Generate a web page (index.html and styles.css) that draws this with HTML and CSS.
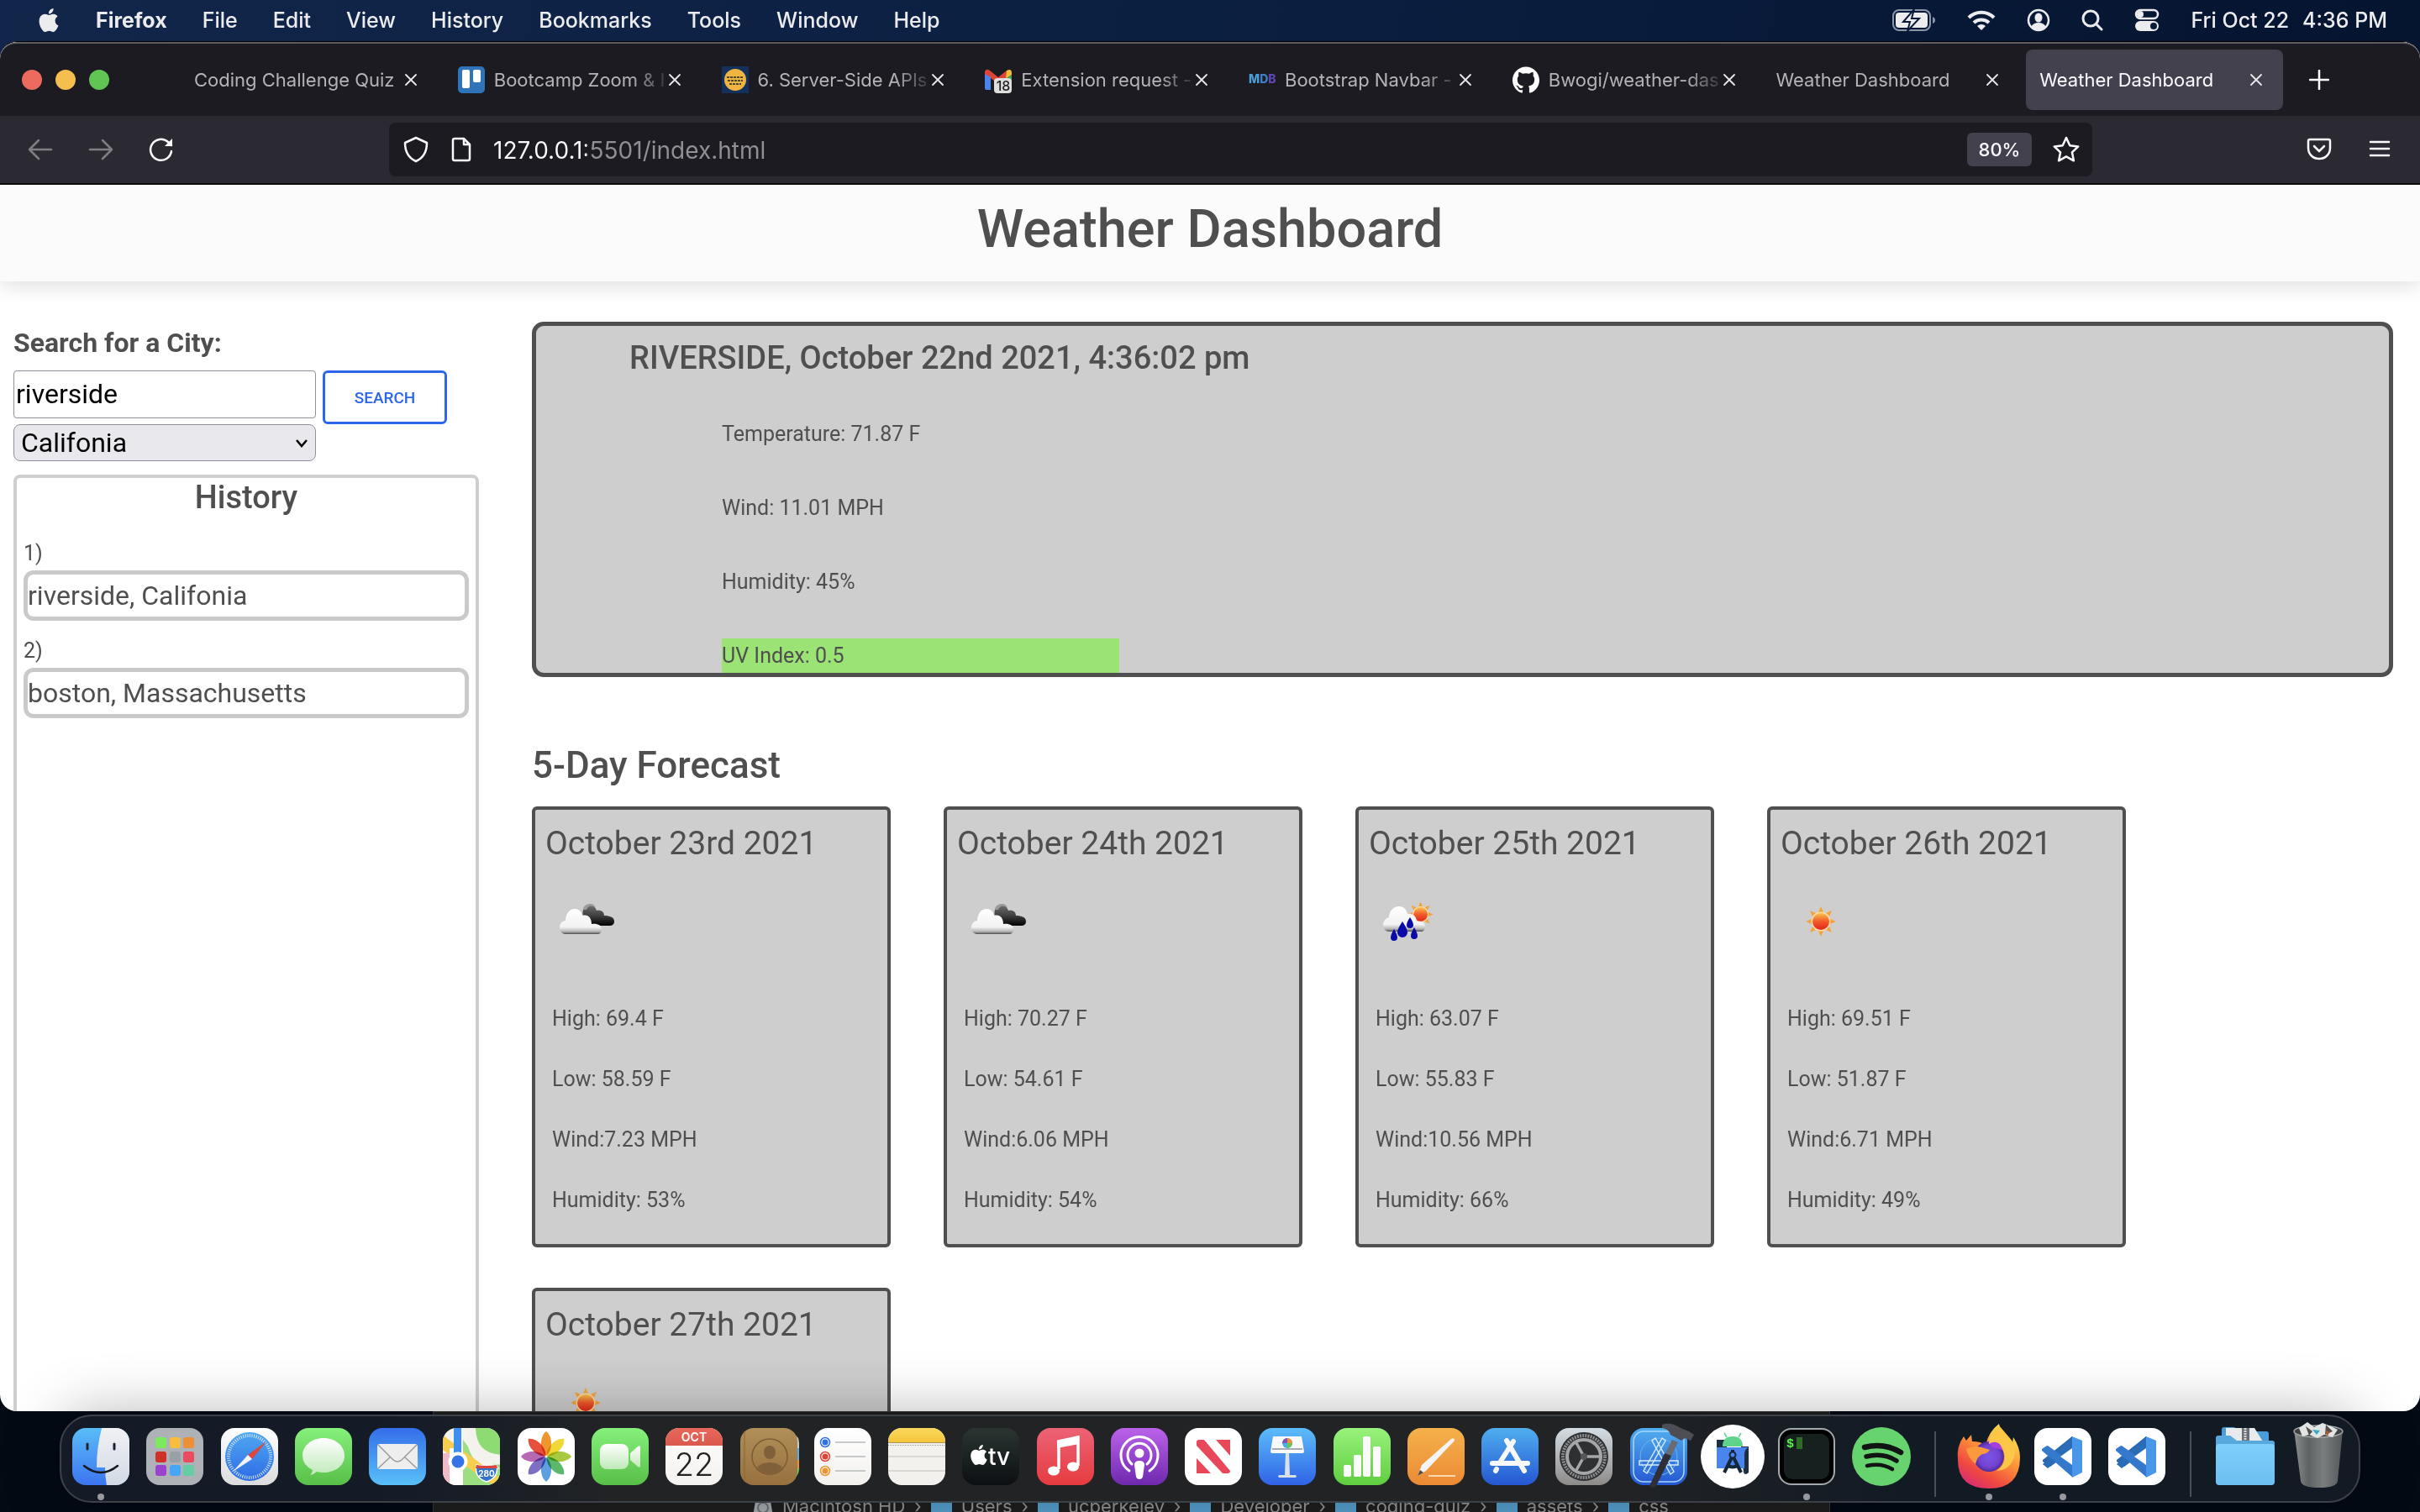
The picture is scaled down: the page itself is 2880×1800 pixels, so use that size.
FILE: index.html
```html
<!DOCTYPE html>
<html lang="en">
<head>
<meta charset="utf-8">
<meta name="viewport" content="width=device-width, initial-scale=1">
<title>Weather Dashboard</title>
<link rel="stylesheet" href="styles.css">
</head>
<body>
<svg class="defs" aria-hidden="true">
  <defs>
    <linearGradient id="g-finder" x2="0" y2="1"><stop offset="0" stop-color="#5cc3f8"/><stop offset="1" stop-color="#3a6ef0"/></linearGradient>
    <linearGradient id="g-face" x2="0" y2="1"><stop offset="0" stop-color="#f3f3f5"/><stop offset="1" stop-color="#cfd8e4"/></linearGradient>
    <linearGradient id="g-white" x2="0" y2="1"><stop offset="0" stop-color="#fff"/><stop offset="1" stop-color="#dcdcdc"/></linearGradient>
    <linearGradient id="g-paper" x2="0" y2="1"><stop offset="0" stop-color="#fff"/><stop offset="1" stop-color="#f3f1ee"/></linearGradient>
    <linearGradient id="g-green" x2="0" y2="1"><stop offset="0" stop-color="#86f07c"/><stop offset="1" stop-color="#58bf48"/></linearGradient>
    <linearGradient id="g-bubble" x2="0" y2="1"><stop offset="0" stop-color="#fff"/><stop offset="1" stop-color="#bfe9b8"/></linearGradient>
    <linearGradient id="g-mail" x2="0" y2="1"><stop offset="0" stop-color="#356eea"/><stop offset="1" stop-color="#58c0f8"/></linearGradient>
    <linearGradient id="g-compass" x2="0" y2="1"><stop offset="0" stop-color="#4fa8f0"/><stop offset="1" stop-color="#2e6be6"/></linearGradient>
    <linearGradient id="g-cal" x2="0" y2="1"><stop offset="0" stop-color="#ee6a5e"/><stop offset="1" stop-color="#d9594d"/></linearGradient>
    <linearGradient id="g-book" x2="0" y2="1"><stop offset="0" stop-color="#b18f58"/><stop offset="1" stop-color="#97703e"/></linearGradient>
    <linearGradient id="g-notes" x2="0" y2="1"><stop offset="0" stop-color="#fbdd68"/><stop offset="1" stop-color="#f5c63c"/></linearGradient>
    <linearGradient id="g-tv" x2="0" y2="1"><stop offset="0" stop-color="#2a3531"/><stop offset="1" stop-color="#0c0f12"/></linearGradient>
    <linearGradient id="g-music" x2="0" y2="1"><stop offset="0" stop-color="#ec6376"/><stop offset="1" stop-color="#e63b40"/></linearGradient>
    <linearGradient id="g-pod" x2="0" y2="1"><stop offset="0" stop-color="#bb62ea"/><stop offset="1" stop-color="#6e29ae"/></linearGradient>
    <linearGradient id="g-key" x2="0" y2="1"><stop offset="0" stop-color="#5cbcf9"/><stop offset="1" stop-color="#2f63e6"/></linearGradient>
    <linearGradient id="g-num" x2="0" y2="1"><stop offset="0" stop-color="#98f27c"/><stop offset="1" stop-color="#5fce3f"/></linearGradient>
    <linearGradient id="g-pages" x2="0" y2="1"><stop offset="0" stop-color="#f4b14b"/><stop offset="1" stop-color="#ec8a35"/></linearGradient>
    <linearGradient id="g-store" x2="0" y2="1"><stop offset="0" stop-color="#50aeef"/><stop offset="1" stop-color="#2557d2"/></linearGradient>
    <linearGradient id="g-sys" x2="0" y2="1"><stop offset="0" stop-color="#d4dde4"/><stop offset="1" stop-color="#8d8b89"/></linearGradient>
    <linearGradient id="g-fox" x1=".8" y1="0" x2=".2" y2="1"><stop offset="0" stop-color="#fff05a"/><stop offset=".45" stop-color="#fb8e38"/><stop offset=".75" stop-color="#f0483f"/><stop offset="1" stop-color="#d42a78"/></linearGradient>
    <radialGradient id="g-globe"><stop offset="0" stop-color="#7a55e8"/><stop offset=".7" stop-color="#7443cf"/><stop offset="1" stop-color="#4d2a9e"/></radialGradient>
    <linearGradient id="g-folder" x2="0" y2="1"><stop offset="0" stop-color="#7fcefb"/><stop offset="1" stop-color="#6dbff2"/></linearGradient>
    <linearGradient id="g-bin"><stop offset="0" stop-color="#8c8e8f"/><stop offset=".3" stop-color="#5f6263"/><stop offset=".6" stop-color="#7b7e7f"/><stop offset="1" stop-color="#55585a"/></linearGradient>
    <linearGradient id="g-cloud" x2="0" y2="1"><stop offset="0" stop-color="#fff"/><stop offset=".72" stop-color="#f2f2f2"/><stop offset=".9" stop-color="#b5b5b5"/><stop offset="1" stop-color="#4c4c4c"/></linearGradient>
    <linearGradient id="g-dark" x2="0" y2="1"><stop offset="0" stop-color="#6e6e6e"/><stop offset=".5" stop-color="#3f3f3f"/><stop offset="1" stop-color="#000"/></linearGradient>
    <linearGradient id="g-sun" x2="0" y2="1"><stop offset="0" stop-color="#f8c34c"/><stop offset=".5" stop-color="#f25a2a"/><stop offset="1" stop-color="#e3261c"/></linearGradient>
    <clipPath id="clip-app"><rect x="6" y="6" width="68" height="68" rx="16"/></clipPath>
    <path id="apple" d="M12.152 6.896c-.948 0-2.415-1.078-3.96-1.04-2.04.027-3.91 1.183-4.961 3.014-2.117 3.675-.546 9.103 1.519 12.09 1.013 1.454 2.208 3.09 3.792 3.039 1.52-.065 2.09-.987 3.935-.987 1.831 0 2.35.987 3.96.948 1.637-.026 2.676-1.48 3.676-2.948 1.156-1.688 1.636-3.325 1.662-3.415-.039-.013-3.182-1.221-3.22-4.857-.026-3.04 2.48-4.494 2.597-4.559-1.429-2.09-3.623-2.324-4.39-2.376-2-.156-3.675 1.09-4.61 1.09zM15.53 3.83c.843-1.012 1.4-2.427 1.245-3.83-1.207.052-2.662.805-3.532 1.818-.78.896-1.454 2.338-1.273 3.714 1.338.104 2.715-.688 3.559-1.701"/>
    <path id="close" d="M2 2l12 12M14 2L2 14" fill="none" stroke="currentColor" stroke-width="1.8" stroke-linecap="round"/>
    <path id="petal" d="M40 39c-7-5-9-22 0-29 9 7 7 24 0 29z"/>
    <g id="sun">
      <path fill="#f2a43a" d="M40 22l3 7h-6zM40 58l3-7h-6zM22 40l7 3v-6zM58 40l-7 3v-6zM27 27l7 3-4 4zM53 27l-3 7-4-4zM27 53l3-7 4 4zM53 53l-7-3 4-4z"/>
      <circle cx="40" cy="40" r="11.500" fill="#fbd9a0"/><circle cx="40" cy="40" r="10" fill="url(#g-sun)"/>
    </g>
    <symbol id="w-sun" viewBox="0 0 80 80"><use href="#sun"/></symbol>
    <symbol id="w-cloud" viewBox="0 0 80 80">
      <path fill="url(#g-dark)" d="M37 34c-2-8 2-13 8-13 5 0 7 3 8 6 6-1 9 2 9 6 7 0 12 2 12 7 0 4-3 5-6 5H46z"/>
      <path fill="#9a9a9a" d="M37 26c0-4 4-7 8-7s6 2 7 5c-4-4-9-3-11 2z"/>
      <path fill="url(#g-cloud)" d="M15 55c-4-1-6-4-6-8s3-8 7-8c0-8 5-14 11-14 5 0 8 3 9 8 7-2 11 3 11 10 6-1 12 1 12 6 0 4-2 6-5 6z"/>
    </symbol>
    <symbol id="w-rain" viewBox="0 0 80 80">
      <use href="#sun" transform="translate(20 -2) scale(.84)"/>
      <path fill="url(#g-cloud)" d="M15 52c-4-1-6-4-6-8s3-8 7-9c0-7 5-13 12-13 6 0 9 4 10 9 6-1 11 3 11 9 6-1 10 1 10 6 0 4-2 6-5 6z"/>
      <g fill="#0a0aa8"><path d="M22 49q4 7 4 10a4 4 0 0 1-8 0q0-3 4-10zM32 40q6 9 6 13a6 6 0 0 1-12 0q0-4 6-13zM41 35q4 6 4 9a4 4 0 0 1-8 0q0-3 4-9zM46 47q4 7 4 10a4 4 0 0 1-8 0q0-3 4-10z"/></g>
    </symbol>
    <symbol id="vscode" viewBox="0 0 80 80">
      <rect x="6" y="6" width="68" height="68" rx="16" fill="#fff"/>
      <path fill="#2b68b0" d="M51 16v17L25 52l-9-6v-2z"/><path fill="#3b82cf" d="M51 64V48L21 27l-6 4v2z"/>
      <path fill="#2a6cb5" d="M51 16v16L22 54l-6-5z"/><path fill="#3579cc" d="M15 32l7-5 29 21v16z"/>
      <path fill="#4a97ea" d="M51 16l12 5v38l-12 6z"/><path fill="#fff" d="M51 30v20L37 40z"/>
    </symbol>
  </defs>
</svg>

<header class="menubar">
  <nav class="menus" aria-label="Menu bar">
    <svg class="apple" viewBox="0 0 24 24" fill="#ececee" role="img" aria-label="Apple"><use href="#apple"/></svg>
    <button class="menu menu-app">Firefox</button>
    <button class="menu">File</button>
    <button class="menu">Edit</button>
    <button class="menu">View</button>
    <button class="menu">History</button>
    <button class="menu">Bookmarks</button>
    <button class="menu">Tools</button>
    <button class="menu">Window</button>
    <button class="menu">Help</button>
  </nav>
  <div class="status">
    <svg width="52" height="26" viewBox="0 0 52 26"><rect x="1" y="1" width="44" height="24" rx="7" fill="none" stroke="#8b95a8" stroke-width="2"/><path d="M48 9q3 1 3 4t-3 4z" fill="#8b95a8"/><rect x="4" y="4" width="38" height="18" rx="4" fill="#ececee"/><path d="M26 0L13 15h8l-3 11 14-15h-9z" fill="#ececee" stroke="#071a3a" stroke-width="2"/></svg>
    <svg width="34" height="26" viewBox="0 0 34 26" fill="none" stroke="#ececee" stroke-width="4"><path d="M2 10a21 21 0 0 1 30 0M8 16a13 13 0 0 1 18 0"/><path d="M12 20a7 7 0 0 1 10 0l-5 5z" fill="#ececee" stroke="none"/></svg>
    <svg width="28" height="28" viewBox="0 0 28 28"><circle cx="14" cy="14" r="12" fill="none" stroke="#ececee" stroke-width="2.500"/><ellipse cx="14" cy="11" rx="4.500" ry="5.500" fill="#ececee"/><path d="M5 22q3-5 9-5t9 5q-4 4-9 4t-9-4z" fill="#ececee"/></svg>
    <svg width="26" height="26" viewBox="0 0 26 26" fill="none" stroke="#ececee" stroke-width="3" stroke-linecap="round"><circle cx="11" cy="11" r="9"/><path d="M18 18l6 6"/></svg>
    <svg width="30" height="28" viewBox="0 0 30 28"><rect x="2" y="2" width="26" height="10" rx="5" fill="none" stroke="#ececee" stroke-width="2.500"/><circle cx="7" cy="7" r="4" fill="#ececee"/><rect x="1" y="15" width="28" height="12" rx="6" fill="#ececee"/><circle cx="23" cy="21" r="4" fill="#071a3a"/></svg>
    <time class="clock"><span>Fri Oct 22</span><span>4:36 PM</span></time>
  </div>
</header>

<main class="browser">
  <div class="tabbar">
    <div class="lights"><i class="light red"></i><i class="light amber"></i><i class="light green"></i></div>
    <div class="tabs" role="tablist">
      <div class="tab" role="tab"><span class="tab-title">Coding Challenge Quiz</span><button class="tab-close" aria-label="Close tab"><svg viewBox="0 0 16 16"><use href="#close"/></svg></button></div>
      <div class="tab" role="tab"><svg class="favicon" viewBox="0 0 32 32"><rect width="32" height="32" rx="5" fill="#2f74b8"/><rect x="5" y="4" width="9" height="22" rx="2" fill="#fff"/><rect x="18" y="4" width="9" height="15" rx="2" fill="#fff"/></svg><span class="tab-title fade">Bootcamp Zoom &amp; I</span><button class="tab-close" aria-label="Close tab"><svg viewBox="0 0 16 16"><use href="#close"/></svg></button></div>
      <div class="tab" role="tab"><svg class="favicon" viewBox="0 0 32 32"><rect width="32" height="32" fill="#14305c"/><circle cx="16" cy="16" r="13" fill="#f0b440"/><path d="M6 13h20M7 17h18M9 21h14" stroke="#4a4630" stroke-width="2" stroke-dasharray="3 1"/></svg><span class="tab-title fade">6. Server-Side APIs:</span><button class="tab-close" aria-label="Close tab"><svg viewBox="0 0 16 16"><use href="#close"/></svg></button></div>
      <div class="tab" role="tab"><svg class="favicon" viewBox="0 0 32 32"><path d="M0 8v18q0 2 2 2h5V12z" fill="#4a82ee"/><path d="M0 6q2-4 6-1l10 8 10-8v9L16 21 7 14v-1L0 9z" fill="#dc4437"/><path d="M26 5q6-3 6 3v2l-7 5z" fill="#f3bc3a"/><path d="M25 15l7-5v8h-7z" fill="#3aa757"/><rect x="11" y="14" width="21" height="18" rx="4" fill="#dedede"/><text class="fav-count" x="22" y="29" text-anchor="middle">18</text></svg><span class="tab-title fade">Extension request -</span><button class="tab-close" aria-label="Close tab"><svg viewBox="0 0 16 16"><use href="#close"/></svg></button></div>
      <div class="tab" role="tab"><svg class="favicon" viewBox="0 0 32 32"><text class="fav-mdb" x="0" y="20"><tspan fill="#4a9fd8">M</tspan><tspan fill="#3d7fc4">D</tspan><tspan fill="#5a48b0">B</tspan></text></svg><span class="tab-title fade">Bootstrap Navbar -</span><button class="tab-close" aria-label="Close tab"><svg viewBox="0 0 16 16"><use href="#close"/></svg></button></div>
      <div class="tab" role="tab"><svg class="favicon" viewBox="0 0 24 24" fill="#fff"><path d="M12 .297c-6.630 0-12 5.373-12 12 0 5.303 3.438 9.800 8.205 11.385.600.113.820-.258.820-.577 0-.285-.010-1.040-.015-2.040-3.338.724-4.042-1.610-4.042-1.610C4.422 18.070 3.633 17.700 3.633 17.700c-1.087-.744.084-.729.084-.729 1.205.084 1.838 1.236 1.838 1.236 1.070 1.835 2.809 1.305 3.495.998.108-.776.417-1.305.760-1.605-2.665-.300-5.466-1.332-5.466-5.930 0-1.310.465-2.380 1.235-3.220-.135-.303-.540-1.523.105-3.176 0 0 1.005-.322 3.300 1.230.960-.267 1.980-.399 3-.405 1.020.006 2.040.138 3 .405 2.280-1.552 3.285-1.230 3.285-1.230.645 1.653.240 2.873.120 3.176.765.840 1.230 1.910 1.230 3.220 0 4.610-2.805 5.625-5.475 5.920.420.360.810 1.096.810 2.220 0 1.606-.015 2.896-.015 3.286 0 .315.210.690.825.570C20.565 22.092 24 17.592 24 12.297c0-6.627-5.373-12-12-12"/></svg><span class="tab-title fade">Bwogi/weather-dash</span><button class="tab-close" aria-label="Close tab"><svg viewBox="0 0 16 16"><use href="#close"/></svg></button></div>
      <div class="tab" role="tab"><span class="tab-title">Weather Dashboard</span><button class="tab-close" aria-label="Close tab"><svg viewBox="0 0 16 16"><use href="#close"/></svg></button></div>
      <div class="tab tab-active" role="tab" aria-selected="true"><span class="tab-title">Weather Dashboard</span><button class="tab-close" aria-label="Close tab"><svg viewBox="0 0 16 16"><use href="#close"/></svg></button></div>
    </div>
    <button class="new-tab" aria-label="New tab"><svg width="24" height="24" viewBox="0 0 24 24" fill="none" stroke="#fbfbfe" stroke-width="2.500" stroke-linecap="round"><path d="M12 1v22M1 12h22"/></svg></button>
  </div>

  <div class="toolbar">
    <div class="nav-buttons">
      <button class="nav-button nav-off" aria-label="Back"><svg width="32" height="32" viewBox="0 0 32 32"><path d="M29 16H3M14 5L3 16l11 11"/></svg></button>
      <button class="nav-button nav-off" aria-label="Forward"><svg width="32" height="32" viewBox="0 0 32 32"><path d="M3 16h26M18 5l11 11-11 11"/></svg></button>
      <button class="nav-button" aria-label="Reload"><svg width="32" height="32" viewBox="0 0 32 32"><path d="M28 18A12.500 12.500 0 1 1 24 7l4 4"/><path d="M29 3v9h-9z" fill="#fbfbfe" stroke="none"/></svg></button>
    </div>
    <div class="address">
      <svg width="32" height="32" viewBox="0 0 32 32"><path d="M16 2L3 8c0 11 4 18 13 22 9-4 13-11 13-22z"/></svg>
      <svg width="28" height="32" viewBox="0 0 28 32"><path d="M17 3H6q-2 0-2 2v22q0 2 2 2h16q2 0 2-2V10zv7h7"/></svg>
      <input class="url" type="text" aria-label="Address" value="127.0.0.1:5501/index.html">
      <button class="zoom-level">80%</button>
      <button class="star" aria-label="Bookmark this page"><svg width="34" height="34" viewBox="0 0 34 34"><path d="M17 3l4.300 9.200 10 1.200-7.400 6.900 2 10L17 25.300 8.100 30.300l2-10L2.700 13.400l10-1.200z"/></svg></button>
    </div>
    <div class="tools">
      <button class="nav-button" aria-label="Pocket"><svg width="32" height="32" viewBox="0 0 32 32"><path d="M5 4h22q2 0 2 2v8c0 8-6 13-13 13S3 22 3 14V6q0-2 2-2zM10 12l6 6 6-6"/></svg></button>
      <button class="nav-button" aria-label="Menu"><svg width="32" height="32" viewBox="0 0 32 32"><path d="M5 7h22M5 15h22M5 23h22"/></svg></button>
    </div>
  </div>

  <div class="page">
    <header class="page-header"><h1>Weather Dashboard</h1></header>
    <div class="layout">
      <aside class="sidebar">
        <form class="search">
          <label class="search-label" for="city">Search for a City:</label>
          <div class="search-row">
            <div class="search-fields">
              <input class="city" id="city" type="text" value="riverside">
              <div class="state-wrap">
                <select class="state" aria-label="State"><option>Califonia</option></select>
                <svg class="state-arrow" width="14" height="10" viewBox="0 0 14 10"><path d="M1 1l6 7 6-7" fill="none" stroke="#000" stroke-width="2.500"/></svg>
              </div>
            </div>
            <button class="search-button" type="button">SEARCH</button>
          </div>
        </form>
        <section class="history">
          <h2>History</h2>
          <p>1)</p>
          <button class="entry">riverside, Califonia</button>
          <p>2)</p>
          <button class="entry">boston, Massachusetts</button>
        </section>
      </aside>
      <div class="content">
        <section class="current">
          <h2>RIVERSIDE, October 22nd 2021, 4:36:02 pm</h2>
          <ul class="readings">
            <li>Temperature: 71.87 F</li>
            <li>Wind: 11.01 MPH</li>
            <li>Humidity: 45%</li>
            <li class="uv">UV Index: 0.5</li>
          </ul>
        </section>
        <h3 class="forecast-title">5-Day Forecast</h3>
        <div class="forecast">
          <article class="day"><h4>October 23rd 2021</h4><svg class="weather" role="img" aria-label="Cloudy"><use href="#w-cloud"/></svg><ul><li>High: 69.4 F</li><li>Low: 58.59 F</li><li>Wind:7.23 MPH</li><li>Humidity: 53%</li></ul></article>
          <article class="day"><h4>October 24th 2021</h4><svg class="weather" role="img" aria-label="Cloudy"><use href="#w-cloud"/></svg><ul><li>High: 70.27 F</li><li>Low: 54.61 F</li><li>Wind:6.06 MPH</li><li>Humidity: 54%</li></ul></article>
          <article class="day"><h4>October 25th 2021</h4><svg class="weather" role="img" aria-label="Rain"><use href="#w-rain"/></svg><ul><li>High: 63.07 F</li><li>Low: 55.83 F</li><li>Wind:10.56 MPH</li><li>Humidity: 66%</li></ul></article>
          <article class="day"><h4>October 26th 2021</h4><svg class="weather" role="img" aria-label="Sunny"><use href="#w-sun"/></svg><ul><li>High: 69.51 F</li><li>Low: 51.87 F</li><li>Wind:6.71 MPH</li><li>Humidity: 49%</li></ul></article>
          <article class="day"><h4>October 27th 2021</h4><svg class="weather" role="img" aria-label="Sunny"><use href="#w-sun"/></svg></article>
        </div>
      </div>
    </div>
  </div>
</main>

<div class="finder">
  <div class="path">
    <span class="crumb"><svg class="drive" viewBox="0 0 24 24"><path d="M4 0h16l4 24H0z" fill="#a9adb2"/><circle cx="12" cy="14" r="6" fill="none" stroke="#6e7378" stroke-width="2"/></svg>Macintosh HD</span><span>›</span>
    <span class="crumb"><i class="folder"></i>Users</span><span>›</span>
    <span class="crumb"><i class="folder"></i>ucberkeley</span><span>›</span>
    <span class="crumb"><i class="folder"></i>Developer</span><span>›</span>
    <span class="crumb"><i class="folder"></i>coding-quiz</span><span>›</span>
    <span class="crumb"><i class="folder"></i>assets</span><span>›</span>
    <span class="crumb"><i class="folder"></i>css</span>
  </div>
</div>

<nav class="dock" aria-label="Dock">
  <a class="app running" href="#" aria-label="Finder"><svg viewBox="0 0 80 80"><g clip-path="url(#clip-app)"><rect width="80" height="80" fill="url(#g-finder)"/><path d="M43 0h40v80H48q-3-15-3-27H35q0-28 8-53z" fill="url(#g-face)"/></g><path d="M24 25v6M56 25v6" stroke="#1d2430" stroke-width="3" stroke-linecap="round"/><path d="M20 51q20 16 40 0" fill="none" stroke="#15181e" stroke-width="2.500" stroke-linecap="round"/></svg></a>
  <a class="app" href="#" aria-label="Launchpad"><svg viewBox="0 0 80 80"><rect x="6" y="6" width="68" height="68" rx="16" fill="#aeb1b6"/><rect x="17" y="17" width="13" height="13" rx="3" fill="#7bea5c"/><rect x="34" y="17" width="13" height="13" rx="3" fill="#f7bd3e"/><rect x="50" y="17" width="13" height="13" rx="3" fill="#ec8f35"/><rect x="17" y="34" width="13" height="13" rx="3" fill="#cf3027"/><rect x="34" y="34" width="13" height="13" rx="3" fill="#9aa1a6"/><rect x="50" y="34" width="13" height="13" rx="3" fill="#ea4b5e"/><rect x="17" y="50" width="13" height="13" rx="3" fill="#9a42d0"/><rect x="34" y="50" width="13" height="13" rx="3" fill="#45a6f5"/><rect x="50" y="50" width="13" height="13" rx="3" fill="#65cda4"/></svg></a>
  <a class="app" href="#" aria-label="Safari"><svg viewBox="0 0 80 80"><rect x="6" y="6" width="68" height="68" rx="16" fill="url(#g-white)"/><circle cx="40" cy="40" r="29" fill="url(#g-compass)"/><circle cx="40" cy="40" r="25" fill="none" stroke="#d6e8fb" stroke-width="4" stroke-dasharray="1 1.600"/><path d="M60 22L43 43l-5-5z" fill="#e0453a"/><path d="M20 58l18-20 5 5z" fill="#f4f4f6"/></svg></a>
  <a class="app" href="#" aria-label="Messages"><svg viewBox="0 0 80 80"><rect x="6" y="6" width="68" height="68" rx="16" fill="url(#g-green)"/><path d="M40 18c14 0 25 9 25 21S54 59 40 59q-4 0-8-1-3 3-8 4 3-3 3-6-12-6-12-17c0-12 11-21 25-21z" fill="url(#g-bubble)"/></svg></a>
  <a class="app" href="#" aria-label="Mail"><svg viewBox="0 0 80 80"><rect x="6" y="6" width="68" height="68" rx="16" fill="url(#g-mail)"/><rect x="16" y="25" width="48" height="30" rx="3" fill="#eeeeef"/><path d="M17 26l18 18q5 4 10 0l18-18M17 54l15-14M63 54L48 40" fill="none" stroke="#9c9ca0" stroke-width="1.500"/></svg></a>
  <a class="app" href="#" aria-label="Maps"><svg viewBox="0 0 80 80"><g clip-path="url(#clip-app)"><rect width="80" height="80" fill="#f5f3ee"/><path d="M42 0h40v60L40 30z" fill="#8edb73"/><path d="M36 28q8 30 44 26v30H30V20z" fill="#9adf80"/><path d="M39 0q-2 44 41 44" fill="none" stroke="#f3f2ec" stroke-width="12"/><path d="M0 10l80 60v14L0 28z" fill="#f7ce4e"/><path d="M0 36h14v44H0z" fill="#f3b9c4"/><path d="M14 30h16v50H14z" fill="#fff"/><path d="M19 0h9v46h-9z" fill="#3f8ff0"/></g><circle cx="24" cy="46" r="9.500" fill="#3573e6" stroke="#fff" stroke-width="4"/><path d="M46 50q12 2 24 0 3 15-12 20-15-5-12-20z" fill="#3473c8" stroke="#fff" stroke-width="1.500"/><path d="M46 50q12 2 24 0l1 4H45z" fill="#d9453c"/><text class="map-shield" x="58" y="64" text-anchor="middle">280</text></svg></a>
  <a class="app" href="#" aria-label="Photos"><svg viewBox="0 0 80 80"><rect x="6" y="6" width="68" height="68" rx="16" fill="#fff"/><g class="petals"><use href="#petal" fill="#f0962f"/><use href="#petal" fill="#eed736" transform="rotate(45 40 40)"/><use href="#petal" fill="#a9c940" transform="rotate(90 40 40)"/><use href="#petal" fill="#5cb86a" transform="rotate(135 40 40)"/><use href="#petal" fill="#5d9fe0" transform="rotate(180 40 40)"/><use href="#petal" fill="#7c6fc4" transform="rotate(225 40 40)"/><use href="#petal" fill="#b869b4" transform="rotate(270 40 40)"/><use href="#petal" fill="#e8503e" transform="rotate(315 40 40)"/></g></svg></a>
  <a class="app" href="#" aria-label="FaceTime"><svg viewBox="0 0 80 80"><rect x="6" y="6" width="68" height="68" rx="16" fill="url(#g-green)"/><rect x="16" y="25" width="34" height="30" rx="8" fill="url(#g-bubble)"/><path d="M52 36l9-8q3-2 3 1v22q0 3-3 1l-9-8z" fill="url(#g-bubble)"/></svg></a>
  <a class="app" href="#" aria-label="Calendar"><svg viewBox="0 0 80 80"><g clip-path="url(#clip-app)"><rect width="80" height="80" fill="url(#g-paper)"/><path d="M0 0h80v27H0z" fill="url(#g-cal)"/></g><text class="cal-month" x="40" y="22" text-anchor="middle">OCT</text><text class="cal-day" x="40" y="63" text-anchor="middle">22</text></svg></a>
  <a class="app" href="#" aria-label="Contacts"><svg viewBox="0 0 80 80"><path d="M70 14q6 2 6 10v8h-6z" fill="#c7c9ca"/><path d="M70 30h6v14h-6z" fill="#55aee8"/><path d="M70 44h6v12h-6z" fill="#ee9136"/><path d="M70 54h6q0 8-6 12z" fill="#68cf62"/><rect x="6" y="6" width="68" height="68" rx="16" fill="url(#g-book)"/><path d="M11 10v60" stroke="#8a6738" stroke-width="1"/><circle cx="41" cy="40" r="21" fill="none" stroke="#7c5c33" stroke-width="1.500"/><ellipse cx="41" cy="35" rx="7" ry="8" fill="#80603a"/><path d="M26 53q5-6 15-6t15 6q-6 7-15 7t-15-7z" fill="#80603a"/></svg></a>
  <a class="app" href="#" aria-label="Reminders"><svg viewBox="0 0 80 80"><rect x="6" y="6" width="68" height="68" rx="16" fill="url(#g-paper)"/><g stroke-width="1.500" fill="none"><circle cx="19" cy="23" r="5.500" stroke="#2f6fe6"/><circle cx="19" cy="40" r="5.500" stroke="#e04337"/><circle cx="19" cy="57" r="5.500" stroke="#ec942f"/></g><circle cx="19" cy="23" r="3.500" fill="#2f6fe6"/><circle cx="19" cy="40" r="3.500" fill="#e04337"/><circle cx="19" cy="57" r="3.500" fill="#ec942f"/><path d="M31 23h36M31 40h36M31 57h36" stroke="#b9bbbf" stroke-width="1.500"/></svg></a>
  <a class="app" href="#" aria-label="Notes"><svg viewBox="0 0 80 80"><g clip-path="url(#clip-app)"><rect width="80" height="80" fill="#f2f1ee"/><path d="M0 0h80v23H0z" fill="url(#g-notes)"/><path d="M0 23.500h80" stroke="#a8925a" stroke-width="1"/><path d="M6 26.500h68" stroke="#9c9a92" stroke-width="1" stroke-dasharray="1 1"/><path d="M0 40h80M0 57h80" stroke="#d2d0ca" stroke-width="1.500"/></g></svg></a>
  <a class="app" href="#" aria-label="TV"><svg viewBox="0 0 80 80"><rect x="6" y="6" width="68" height="68" rx="16" fill="url(#g-tv)"/><g transform="translate(14 26)" fill="#fff"><use href="#apple"/></g><text class="tv-text" x="37" y="50">tv</text></svg></a>
  <a class="app" href="#" aria-label="Music"><svg viewBox="0 0 80 80"><rect x="6" y="6" width="68" height="68" rx="16" fill="url(#g-music)"/><path d="M32 55V22l23-5v34" fill="none" stroke="#fff" stroke-width="3.500"/><path d="M30 21l26-5v9l-26 5z" fill="#fff"/><ellipse cx="26" cy="57" rx="7" ry="5.500" fill="#fff"/><ellipse cx="49" cy="52" rx="7" ry="5.500" fill="#fff"/></svg></a>
  <a class="app" href="#" aria-label="Podcasts"><svg viewBox="0 0 80 80"><rect x="6" y="6" width="68" height="68" rx="16" fill="url(#g-pod)"/><g fill="none" stroke="#fff" stroke-width="3" stroke-linecap="round"><path d="M28 57a22 22 0 1 1 24 0"/><path d="M31 49a14 14 0 1 1 18 0"/></g><circle cx="40" cy="36" r="5.500" fill="#fff"/><path d="M34 50q0-5 6-5t6 5l-2 14q-1 3-4 3t-4-3z" fill="#fff"/></svg></a>
  <a class="app" href="#" aria-label="News"><svg viewBox="0 0 80 80"><rect x="6" y="6" width="68" height="68" rx="16" fill="#fff"/><path d="M20 23q0-3 3-3h6l31 37q0 3-3 3h-6L20 27zM43 20h17v19zM20 42v18h17z" fill="#e9475a"/></svg></a>
  <a class="app" href="#" aria-label="Keynote"><svg viewBox="0 0 80 80"><rect x="6" y="6" width="68" height="68" rx="16" fill="url(#g-key)"/><path d="M38 34h4l1 28h7q2 3-1 3H31q-3 0-1-3h7z" fill="#d9e0ea"/><path d="M23 16h34l3 18q0 2-2 2H22q-2 0-2-2z" fill="#fafafa"/><path d="M22 31h36" stroke="#8892a0" stroke-width="1.500"/><circle cx="40" cy="24" r="6" fill="#47aee8"/><path d="M40 24v-6a6 6 0 0 1 6 6z" fill="#ee8f39"/><path d="M40 24h-6a6 6 0 0 1 6-6z" fill="#8751b6"/><path d="M40 24v6a6 6 0 0 0 6-6z" fill="#6cc35c"/></svg></a>
  <a class="app" href="#" aria-label="Numbers"><svg viewBox="0 0 80 80"><rect x="6" y="6" width="68" height="68" rx="16" fill="url(#g-num)"/><g fill="#fbfbfb"><rect x="18" y="50" width="9" height="14" rx="2"/><rect x="30" y="38" width="9" height="26" rx="2"/><rect x="41" y="16" width="9" height="48" rx="2"/><rect x="53" y="28" width="9" height="36" rx="2"/></g></svg></a>
  <a class="app" href="#" aria-label="Pages"><svg viewBox="0 0 80 80"><rect x="6" y="6" width="68" height="68" rx="16" fill="url(#g-pages)"/><path d="M31 63h32" stroke="#fbd9b0" stroke-width="2"/><path d="M18 63l5-13 35-31q4-2 4 2L28 57z" fill="#f4f4f4"/><path d="M18 63l3-7 4 3z" fill="#4e4a47"/></svg></a>
  <a class="app" href="#" aria-label="App Store"><svg viewBox="0 0 80 80"><rect x="6" y="6" width="68" height="68" rx="16" fill="url(#g-store)"/><g stroke="#f6f8fb" stroke-width="6" stroke-linecap="round"><path d="M44 22L28 47M36 21l21 36M19 48h42M24 55l-1 2"/></g></svg></a>
  <a class="app" href="#" aria-label="System Preferences"><svg viewBox="0 0 80 80"><rect x="6" y="6" width="68" height="68" rx="16" fill="url(#g-sys)"/><circle cx="40" cy="40" r="29" fill="#2f3032"/><circle cx="40" cy="40" r="25" fill="none" stroke="#8c8d8f" stroke-width="4" stroke-dasharray="2 1.200"/><circle cx="40" cy="40" r="20" fill="none" stroke="#a5a6a7" stroke-width="4"/><path d="M40 40h20M40 40L30 22M40 40L30 58" stroke="#a5a6a7" stroke-width="3.500"/><circle cx="40" cy="40" r="4" fill="#55575a"/></svg></a>
  <a class="app" href="#" aria-label="Xcode"><svg viewBox="0 0 80 80"><rect x="6" y="6" width="68" height="68" rx="16" fill="url(#g-store)"/><rect x="10" y="10" width="60" height="60" rx="12" fill="none" stroke="#a9d6fa" stroke-width="1.500"/><circle cx="40" cy="40" r="22" fill="none" stroke="#6eb4f2" stroke-width="1"/><g fill="none" stroke="#d4ebfc" stroke-width="1.500"><path d="M36 18l22 40-4 3-22-40zM44 18L22 57l4 3 22-39zM17 45h46v5H17z"/></g><path d="M56 20l7 3-10 20-7-3z" fill="#6a6c72"/><path d="M47 36l8 3-18 36q-4 4-8 0z" fill="#2f2f38"/><path d="M44 2q10-4 22 4l10 4 6 4-4 7-7-3-4 3-13-7q-2-7-10-8z" fill="#4d4d56"/></svg></a>
  <a class="app" href="#" aria-label="Android Studio"><svg viewBox="0 0 80 80"><circle cx="40" cy="40" r="38" fill="#fff"/><path d="M21 20h12v9H21z" fill="#1c3042"/><path d="M50 28h9v31q-4 4-6 0z" fill="#1c3042"/><path d="M21 29h38q-5 2-5 8v17H21z" fill="#4a84ef"/><path d="M28 28q0-12 12-12t12 12z" fill="#5fd28c"/><path d="M33 17l-3-5M47 17l3-5" stroke="#5fd28c" stroke-width="1.500"/><path d="M40 32v4M39 41l-9 18M41 41l9 18M34 50q6 5 12 0" fill="none" stroke="#14283a" stroke-width="4"/><circle cx="40" cy="38" r="3.500" fill="#4a84ef" stroke="#14283a" stroke-width="2"/></svg></a>
  <a class="app running" href="#" aria-label="Terminal"><svg viewBox="0 0 80 80"><rect x="7" y="7" width="66" height="66" rx="15" fill="#000" stroke="#a2a9ad" stroke-width="2"/><rect x="13" y="13" width="54" height="54" rx="10" fill="#16201f"/><text class="term-text" x="16" y="29">$</text><rect x="28" y="17" width="7" height="14" fill="#2f6d27"/></svg></a>
  <a class="app" href="#" aria-label="Spotify"><svg viewBox="0 0 80 80"><circle cx="40" cy="40" r="35" fill="#66d36e"/><g fill="none" stroke="#101412" stroke-linecap="round"><path d="M20 29q23-6 43 6" stroke-width="6.500"/><path d="M22 40q20-5 36 5" stroke-width="5.500"/><path d="M23 51q17-4 30 4" stroke-width="4.500"/></g></svg></a>
  <span class="divider"></span>
  <a class="app running" href="#" aria-label="Firefox"><svg viewBox="0 0 80 80"><path d="M3 44q-2-16 7-28l3 5 6-7 1 8q10 0 16 4 4-16 16-25 1 9 10 17l6 6 1-7q8 12 8 24 0 37-37 37T3 44z" fill="url(#g-fox)"/><circle cx="40" cy="40" r="18" fill="url(#g-globe)"/><path d="M38 22q14-4 18 10l-12-3z" fill="#a63fe0"/><path d="M13 31q9-5 18-2l10 3q-3 5-9 5-6 3-8 12-9-8-11-18z" fill="#fb9a3d"/><path d="M56 29q8 18-7 28 18-1 22-20 1-12-7-20l-12-14q-12 9-12 22 10-6 16 4z" fill="#fcc747"/></svg></a>
  <a class="app running" href="#" aria-label="Visual Studio Code"><svg><use href="#vscode"/></svg></a>
  <a class="app" href="#" aria-label="Visual Studio Code"><svg><use href="#vscode"/></svg></a>
  <span class="divider"></span>
  <a class="app" href="#" aria-label="Downloads"><svg viewBox="0 0 80 80"><path d="M12 8q0-3 3-3h12l6 5h32q3 0 3 3v14H12z" fill="#4a9dd8"/><path d="M17 6h34l10 16H17z" fill="#e9eaec"/><path d="M36 6h9v16h-9z" fill="#6b6e72"/><path d="M40 6v16" stroke="#d7d9db" stroke-width="3" stroke-dasharray="2 1"/><path d="M5 18q0-3 3-3h14l8 6h42q3 0 3 3v10H5z" fill="#57a8dc"/><rect x="5" y="25" width="70" height="49" rx="4" fill="url(#g-folder)"/></svg></a>
  <a class="app" href="#" aria-label="Trash"><svg viewBox="0 0 80 80"><path d="M10 8l58 1-6 60q-1 8-22 8t-22-8z" fill="url(#g-bin)"/><ellipse cx="39" cy="10" rx="29" ry="7" fill="#3f4143" stroke="#a3a6a7" stroke-width="1.500"/><path d="M16 6l10-7 8 6 10-5 10 4 8 4-6 9-10-3-8 4-10-4-8 2z" fill="#e3e4e4"/><path d="M24 4l8 6-4 5zM48 2l8 8-9 4z" fill="#54504e"/><path d="M32 8l9 1-4 5z" fill="#39a9c9"/><path d="M48 9l5 2-4 5z" fill="#b4562f"/></svg></a>
</nav>
</body>
</html>
```
FILE: styles.css
```css
:root {
  --ink: #4f4f4f;
  --card: #cecece;
  --chrome-dark: #1c1b22;
  --chrome: #2b2a33;
  --chrome-light: #42414d;
  --chrome-text: #fbfbfe;
}

* { box-sizing: border-box; }

body {
  margin: 0;
  height: 100vh;
  display: flex;
  flex-direction: column;
  position: relative;
  overflow: hidden;
  background: linear-gradient(100deg, #11264a, #0b1f41 50%, #05142f) top / 100% 80px no-repeat, #020a14;
  font-family: Roboto, "Liberation Sans", sans-serif;
  color: var(--ink);
}

button, input, select { font: inherit; margin: 0; }
button { border: 0; padding: 0; background: none; color: inherit; }
ul { list-style: none; margin: 0; padding: 0; }
h1, h2, h3, h4, p { margin: 0; font-weight: 500; }
svg { display: block; flex: none; }
.defs { position: absolute; width: 0; height: 0; }

/* Menu bar */
.menubar {
  flex: none;
  height: 49px;
  display: flex;
  justify-content: space-between;
  padding: 0 39px 2px 44px;
  font: 500 25px/46px Inter, sans-serif;
  color: #ececee;
}
.menus { display: flex; align-items: center; gap: 42px; }
.apple { width: 28px; height: 32px; }
.menu-app { font-weight: 700; }
.status { display: flex; align-items: center; gap: 37px; }
.clock { display: flex; gap: 16px; }

/* Browser window */
.browser {
  flex: 1;
  min-height: 0;
  margin-bottom: 120px;
  display: flex;
  flex-direction: column;
  overflow: hidden;
  border-radius: 20px;
  border-top: 1px solid #000;
  background: #fff;
}
.tabbar {
  flex: none;
  height: 88px;
  display: flex;
  align-items: center;
  padding: 0 108px 0 26px;
  border-top: 2px solid #5c5c61;
  border-radius: 20px 20px 0 0;
  background: var(--chrome-dark);
  font: 22px/28px Inter, sans-serif;
  color: #b4b4b8;
}
.lights { display: flex; gap: 16px; width: 185px; }
.light { width: 24px; height: 24px; border-radius: 50%; }
.red { background: #ed6a5e; }
.amber { background: #f4bf4f; }
.green { background: #61c554; }
.tabs { flex: 1; display: flex; min-width: 0; }
.tab {
  flex: 1 1 0;
  min-width: 0;
  height: 72px;
  margin: 0 4px;
  padding: 0 24px 0 16px;
  display: flex;
  align-items: center;
  gap: 3px;
  border-radius: 8px;
}
.tab-active { background: var(--chrome-light); color: var(--chrome-text); }
.favicon { width: 32px; height: 32px; margin-right: 8px; }
.fav-count { font: 500 16px Inter, sans-serif; fill: #222; }
.fav-mdb { font: 800 14px Inter, sans-serif; }
.tab-title { flex: 1; min-width: 0; overflow: hidden; white-space: nowrap; }
.fade { -webkit-mask-image: linear-gradient(90deg, #000 80%, transparent 104%); mask-image: linear-gradient(90deg, #000 80%, transparent 104%); }
.tab-close { width: 16px; height: 16px; color: #e8e8ec; }
.tab-close svg { width: 16px; height: 16px; }
.new-tab { margin-left: 27px; }

.toolbar {
  flex: none;
  height: 82px;
  display: flex;
  align-items: center;
  padding: 0 32px;
  border-bottom: 2px solid #0c0c0d;
  background: var(--chrome);
}
.toolbar svg { fill: none; stroke: var(--chrome-text); stroke-width: 2.5px; stroke-linejoin: round; stroke-linecap: round; }
.nav-buttons { display: flex; gap: 40px; width: 431px; }
.nav-off { opacity: .4; }
.address {
  flex: 1;
  min-width: 0;
  height: 64px;
  display: flex;
  align-items: center;
  gap: 24px;
  padding: 0 14px 0 16px;
  border-radius: 8px;
  background: var(--chrome-dark);
}
.url {
  flex: 1;
  min-width: 0;
  border: 0;
  padding: 2px 0 0;
  outline: 0;
  font: 28px/36px Inter, sans-serif;
  color: transparent;
  background: linear-gradient(90deg, #fbfbfe 111px, #909095 111px);
  -webkit-background-clip: text;
  background-clip: text;
}
.zoom-level {
  width: 77px;
  height: 40px;
  border-radius: 6px;
  background: var(--chrome-light);
  color: var(--chrome-text);
  font: 500 22px/40px Inter, sans-serif;
}
.tools { display: flex; gap: 40px; padding-left: 254px; }

/* Weather page */
.page { flex: 1; min-height: 0; overflow: hidden; font-size: 25px; line-height: 40px; }
.page-header {
  padding: 14px 0 24px;
  background: #fbfbfb;
  box-shadow: 0 4px 24px rgba(0, 0, 0, .14);
  text-align: center;
}
.page-header h1 { font-size: 63px; line-height: 77px; }
.layout {
  display: grid;
  grid-template-columns: 554px minmax(0, 1fr);
  gap: 63px;
  padding: 48px 32px 48px 16px;
}
.sidebar { display: flex; flex-direction: column; padding-top: 6px; }
.search-label { display: block; margin-bottom: 14px; font-size: 32px; line-height: 38px; font-weight: 700; }
.search-row { display: flex; align-items: flex-start; gap: 8px; }
.search-fields { display: flex; flex-direction: column; gap: 7px; width: 360px; }
.city {
  width: 100%;
  height: 57px;
  padding: 0 2px 2px;
  border: 1px solid #8f8f9d;
  border-radius: 4px;
  background: #fff;
  color: #000;
  font-size: 32px;
}
.state-wrap { position: relative; }
.state {
  display: block;
  width: 100%;
  height: 44px;
  padding: 0 8px;
  appearance: none;
  border: 1px solid #8f8f9d;
  border-radius: 8px;
  background: #e9e9ed;
  color: #000;
  font-size: 32px;
  line-height: 40px;
}
.state-arrow { position: absolute; right: 10px; top: 18px; }
.search-button {
  width: 148px;
  height: 64px;
  padding-top: 2px;
  border: 3px solid #2c66ea;
  border-radius: 6px;
  color: #2c66ea;
  font-size: 19px;
  font-weight: 500;
}
.history {
  flex: 1;
  margin-top: 16px;
  padding: 0 8px;
  border: 4px solid #cfcfcf;
  border-radius: 8px;
}
.history h2 { margin-bottom: 24px; font-size: 38px; line-height: 46px; text-align: center; }
.history p { font-weight: 400; }
.entry {
  display: block;
  width: 100%;
  height: 60px;
  margin-bottom: 16px;
  border: 5px solid #cacaca;
  border-radius: 12px;
  font-size: 32px;
  line-height: 50px;
  text-align: left;
}
.current {
  padding: 15px 0 0 111px;
  border: 5px solid var(--ink);
  border-radius: 14px;
  background: var(--card);
}
.current h2 { margin-bottom: 47px; font-size: 38px; line-height: 46px; }
.readings { display: flex; flex-direction: column; gap: 47px; padding-left: 110px; line-height: 41px; }
.uv { width: 473px; background: #9be375; }
.forecast-title { margin: 78px 0 22px; font-size: 44px; line-height: 54px; }
.forecast { display: flex; flex-wrap: wrap; gap: 48px 63px; }
.day {
  width: 427px;
  min-height: 525px;
  padding: 16px 12px 32px;
  border: 4px solid var(--ink);
  border-radius: 6px;
  background: var(--card);
}
.day h4 { font-size: 39px; line-height: 48px; font-weight: 400; }
.weather { width: 80px; height: 80px; margin: 29px 0 56px 8px; }
.day ul { display: flex; flex-direction: column; gap: 32px; padding-left: 8px; }

/* Finder window peeking out below the dock */
.finder {
  position: absolute;
  left: 515px;
  right: 702px;
  bottom: 0;
  height: 120px;
  z-index: -1;
  display: flex;
  align-items: flex-end;
  border: 1px solid #3a3a3c;
  border-bottom: 0;
  background: #1f1f20;
  overflow: hidden;
}
.path {
  display: flex;
  align-items: center;
  gap: 11px;
  height: 14px;
  padding-left: 380px;
  font: 22px/28px Inter, sans-serif;
  color: #98989a;
}
.crumb { display: flex; align-items: center; gap: 11px; }
.drive { width: 24px; height: 24px; }
.folder { width: 25px; height: 24px; border-radius: 3px; background: #57a3d2; }

/* Dock */
.dock {
  position: absolute;
  left: 71px;
  right: 71px;
  bottom: 11px;
  display: flex;
  padding: 8px 3px 0;
  border: 2px solid #3c4148;
  border-radius: 38px;
  background: linear-gradient(90deg, #141b27 14%, #212325 24%, #212325 68%, #121a24 80%);
  box-shadow: 0 0 70px rgba(0, 0, 0, .3);
}
.app { flex: 1; display: flex; flex-direction: column; align-items: center; gap: 4px; }
.app svg { width: 80px; height: 80px; overflow: visible; }
.app::after { content: ""; width: 8px; height: 8px; margin-bottom: 1px; }
.running::after { border-radius: 50%; background: #98999f; }
.divider { width: 2px; height: 78px; margin: 10px 19px 0; background: #4b4f55; }
.petals use { mix-blend-mode: multiply; }
.cal-month { font: 600 14px Inter, sans-serif; fill: #fff; }
.cal-day { font: 300 38px Inter, sans-serif; fill: #222; }
.map-shield { font: 700 10px Inter, sans-serif; fill: #fff; }
.tv-text { font: 500 28px Inter, sans-serif; fill: #fff; }
.term-text { font: 700 15px "Liberation Mono", monospace; fill: #5cf04a; }
```
